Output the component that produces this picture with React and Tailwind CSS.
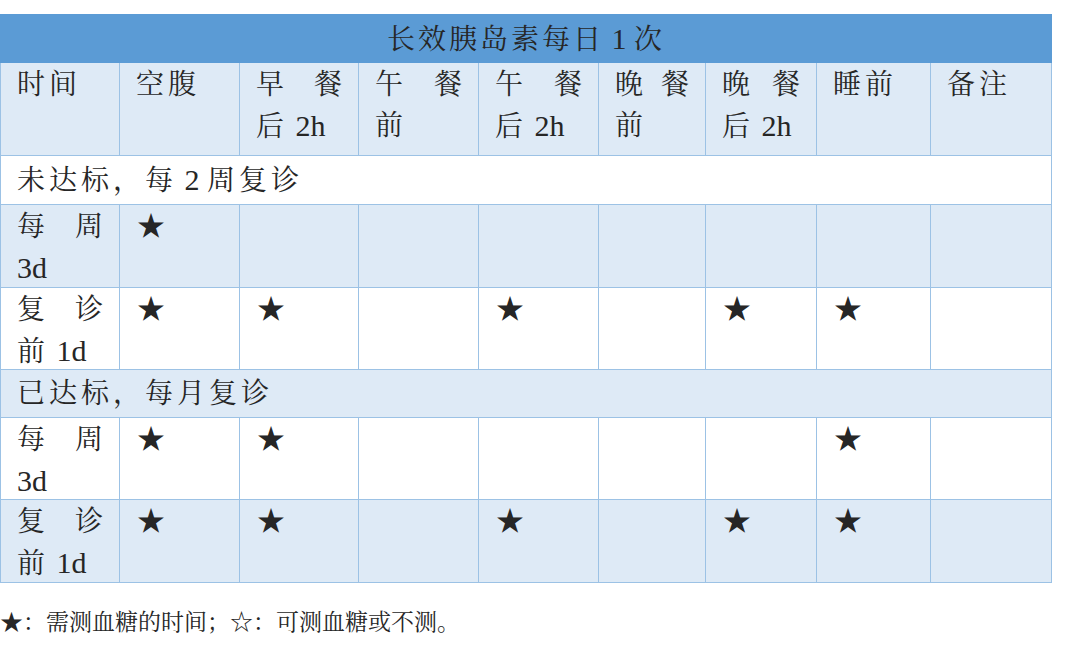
import React from "react";

const B = "border-r border-b border-[#9cc2e5]";

function L({ t }) {
  return <span className="tracking-normal text-[30px]">{t}</span>;
}

function J({ a, b }) {
  return (
    <div className="flex justify-between tracking-normal">
      <span>{a}</span>
      <span>{b}</span>
    </div>
  );
}

function Cell({ bg, first, children }) {
  return (
    <div
      className={`${B} ${first ? "border-l" : ""} ${bg ? "bg-[#deeaf6]" : "bg-white"} pl-4 pr-4 pt-[1px]`}
    >
      {children}
    </div>
  );
}

function Star() {
  return <div className="pl-[1px]">★</div>;
}

function BodyRow({ bg, a, b, second, stars }) {
  return (
    <>
      <Cell bg={bg} first>
        <J a={a} b={b} />
        <div>{second}</div>
      </Cell>
      {stars.map((s, i) => (
        <Cell key={i} bg={bg}>
          {s ? <Star /> : null}
        </Cell>
      ))}
    </>
  );
}

function Section({ bg, children }) {
  return (
    <div
      className={`col-span-9 border-l border-r border-b border-[#9cc2e5] ${bg ? "bg-[#deeaf6]" : "bg-white"} pl-4 pt-[3px]`}
    >
      {children}
    </div>
  );
}

export default function App() {
  const full = [true, true, false, true, false, true, true, false];
  return (
    <div className="w-[1080px] h-[649px] bg-white text-[#262626] font-['Liberation_Serif','Noto_Serif_CJK_SC','Noto_Sans_CJK_SC',serif] overflow-hidden">
      <div className="pt-[14px] w-[1052px]">
        <div className="grid grid-cols-[120px_120px_119px_120px_120px_107px_111px_114px_121px] grid-rows-[49px_93px_49px_83px_82px_48px_82px_83px] text-[28px] tracking-[4px] leading-[41px]">
          <div className="col-span-9 bg-[#5b9bd5] text-center leading-[49px] tracking-[3px]">
            长效胰岛素每日<L t={"\u00a01\u00a0"} />次
          </div>

          <Cell bg first>时间</Cell>
          <Cell bg>空腹</Cell>
          <Cell bg>
            <J a="早" b="餐" />
            <div>后<L t=" 2h" /></div>
          </Cell>
          <Cell bg>
            <J a="午" b="餐" />
            <div>前</div>
          </Cell>
          <Cell bg>
            <J a="午" b="餐" />
            <div>后<L t=" 2h" /></div>
          </Cell>
          <Cell bg>
            <J a="晚" b="餐" />
            <div>前</div>
          </Cell>
          <Cell bg>
            <J a="晚" b="餐" />
            <div>后<L t=" 2h" /></div>
          </Cell>
          <Cell bg>睡前</Cell>
          <Cell bg>备注</Cell>

          <Section>
            未达标，每<L t=" 2 " />周复诊
          </Section>
          <BodyRow
            bg
            a="每"
            b="周"
            second={<L t="3d" />}
            stars={[true, false, false, false, false, false, false, false]}
          />
          <BodyRow
            a="复"
            b="诊"
            second={<>前<L t=" 1d" /></>}
            stars={full}
          />

          <Section bg>已达标，每月复诊</Section>
          <BodyRow
            a="每"
            b="周"
            second={<L t="3d" />}
            stars={[true, true, false, false, false, false, true, false]}
          />
          <BodyRow
            bg
            a="复"
            b="诊"
            second={<>前<L t=" 1d" /></>}
            stars={full}
          />
        </div>
      </div>
      <div className="mt-[24px] text-[23px] leading-[32px] font-['Liberation_Serif','Noto_Serif_CJK_SC','Noto_Sans_CJK_SC',serif]">
        ★：需测血糖的时间；☆：可测血糖或不测。
      </div>
    </div>
  );
}
